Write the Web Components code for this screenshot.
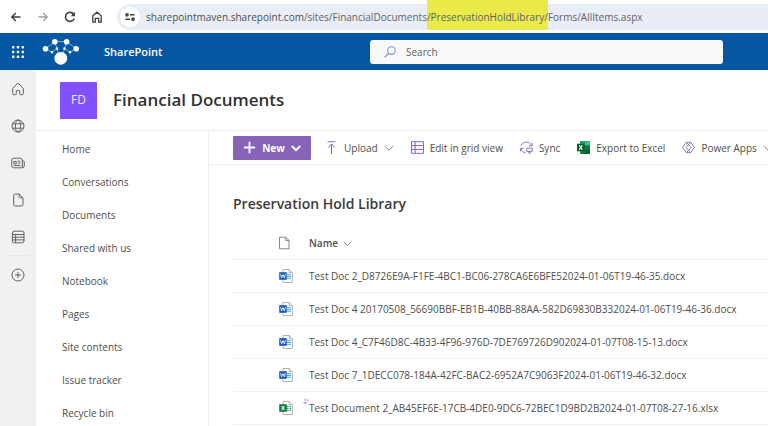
<!DOCTYPE html>
<html lang="en">
<head>
<meta charset="utf-8">
<title>Preservation Hold Library</title>
<style>
  html, body { height: 100%; }
  body { margin: 0; background: #fff; color: #504e4c; font: 10px/16px "Open Sans", "Noto Sans", sans-serif; overflow: hidden; }
</style>
</head>
<body>
<sp-app></sp-app>
<script>
const ICONS = {
  back: ['0 0 12 12', '<path d="M10.500 6H1.800M5.800 2 1.800 6l4 4" stroke-width="1.400"/>'],
  forward: ['0 0 12 12', '<path d="M1.500 6h8.700M6.200 2l4 4-4 4" stroke-width="1.300"/>'],
  reload: ['0 0 12 12', '<path d="M10.2 7.4A4.5 4.5 0 1 1 9.6 3.2" stroke-width="1.6"/><path d="M11 .8v4.400H6.800z" fill="currentColor" stroke="none"/>'],
  house: ['0 0 12 12', '<path d="M1.8 11.2V4.8L6 1.2l4.200 3.600v6.400H7.700V7.400H4.300v3.800z" stroke-width="1.300"/>'],
  tune: ['0 0 12 12', '<g stroke-width="1.500"><circle cx="3" cy="3.800" r="1.100"/><path d="M6 3.800h4.600M1.400 8.200h4.600"/><circle cx="9" cy="8.200" r="1.100"/></g>'],
  waffle: ['0 0 12 12', '<g fill="currentColor" stroke="none"><rect width="2.400" height="2.400" rx=".6"/><rect x="4.800" width="2.400" height="2.400" rx=".6"/><rect x="9.600" width="2.400" height="2.400" rx=".6"/><rect y="4.800" width="2.400" height="2.400" rx=".6"/><rect x="4.800" y="4.800" width="2.400" height="2.400" rx=".6"/><rect x="9.600" y="4.800" width="2.400" height="2.400" rx=".6"/><rect y="9.600" width="2.400" height="2.400" rx=".6"/><rect x="4.800" y="9.600" width="2.400" height="2.400" rx=".6"/><rect x="9.600" y="9.600" width="2.400" height="2.400" rx=".6"/></g>'],
  network: ['0 0 38 27', '<path d="M3.500 10.300 12.500 3.200h12.500l9 7.100-6 3.300M3.500 10.300l6.500 3.300 5-3.600-2.500-6.800M25 3.200 22.500 10l5.500 3.600M15 10l1.500 6M22.500 10l-1.500 6" stroke-width=".7" opacity=".75"/><g fill="currentColor" stroke="none"><circle cx="3.500" cy="10.300" r="2.800"/><circle cx="12.800" cy="3.200" r="2.800"/><circle cx="24.600" cy="3.200" r="2.800"/><circle cx="34.200" cy="10.300" r="2.800"/><circle cx="10" cy="13.700" r="1.200"/><circle cx="15" cy="10" r="1.200"/><circle cx="22.500" cy="10" r="1.200"/><circle cx="28" cy="13.700" r="1.200"/><circle cx="18.800" cy="19.800" r="6.400"/></g>'],
  search: ['0 0 13 13', '<circle cx="8" cy="5" r="4.100" stroke-width="1.100"/><path d="M5 8.100.8 12.200" stroke-width="1.200"/>'],
  home: ['0 0 14 14', '<path d="M1.700 6.400 6 2a1.400 1.400 0 0 1 2 0l4.300 4.400v5.300a1 1 0 0 1-1 1H9.500a.8.8 0 0 1-.8-.8V9.200a.7.7 0 0 0-.7-.7H6a.7.7 0 0 0-.7.7v2.700a.8.8 0 0 1-.8.8H2.700a1 1 0 0 1-1-1z"/>'],
  globe: ['0 0 14 14', '<circle cx="7" cy="7" r="6"/><ellipse cx="7" cy="7" rx="2.700" ry="6"/><path d="M1.600 4.800h10.800M1.600 9.200h10.800"/>'],
  news: ['0 0 14 14', '<path d="M11.300 11.800H2.700a2 2 0 0 1-2-2V4.200a2 2 0 0 1 2-2h6.600a2 2 0 0 1 2 2zM11.300 4.700c1.300 0 2 .5 2 1.600v3.500a2 2 0 0 1-2 2"/><path d="M2.800 5.400h2.400v2.400H2.800zM6.600 5.200h2.800M6.600 7.200h2.800M2.800 9.500h6.600"/>'],
  page: ['0 0 14 14', '<path d="M4.200 1h4L12 4.800v6.700A1.500 1.500 0 0 1 10.500 13H4.200a1.500 1.500 0 0 1-1.500-1.500v-9A1.500 1.500 0 0 1 4.200 1zM8.200 1v2.800a1 1 0 0 0 1 1H12"/>'],
  lists: ['0 0 14 14', '<path d="M3.200 1.200h8a1.800 1.800 0 0 1 1.800 1.800v8a1.800 1.800 0 0 1-1.800 1.800h-8A1.800 1.800 0 0 1 1.400 11V3a1.800 1.800 0 0 1 1.800-1.800zM1.400 4.500H13M1.400 7.200H13M1.400 9.900H13M4.600 4.500v8.300"/>'],
  add: ['0 0 14 14', '<circle cx="7" cy="7" r="6"/><path d="M7 4v6M4 7h6"/>'],
  plus: ['0 0 12 12', '<path d="M6 .8v10.400M.8 6h10.400" stroke-width="1.700"/>'],
  chevron: ['0 0 10 10', '<path d="M.8 3 5 7.200 9.200 3"/>'],
  upload: ['0 0 12 12', '<path d="M2.400.7h7.200M6 12V2.800M3 6l3-3.200L9 6" stroke-width=".9"/>'],
  grid: ['0 0 12 12', '<path d="M.5.600h11v10.800H.5zM.5 4.200h11M.5 7.800h11M3.800.600v10.800" stroke-width=".9"/>'],
  sync: ['0 0 13 12', '<path d="M.8 4.500C2.200 1.600 4.200.6 6.400.6c2.300 0 4.300 1.400 5.300 3.600M12.100 1.200v3.200H9M5.400 11.300C3 11 1.200 9.200.8 6.900M.6 9.800V6.900h3M6.800 6.700h5.500v3.200H6.800zM9.500 9.900v1.500M8 11.500h3" stroke-width=".9"/>'],
  power: ['0 0 13 12', '<path d="M4.400.8h4.200L12.500 6 8.600 11.200H4.400L.5 6zM4.400.8l4.800 5.200-4.800 5.200M8.600.8 4 6l4.600 5.200" stroke-width=".9" stroke-linejoin="round"/>'],
  excel: ['0 0 12 12', '<g stroke="none"><path d="M3 0h9v12H3z" fill="#107c41"/><path d="M3 0h4.500v4H3z" fill="#21a366"/><path d="M7.500 0H12v4H7.500z" fill="#33c481"/><path d="M7.500 8H12v4H7.500z" fill="#0f5f33"/><path d="M0 2.500h7v7H0z" fill="#0d5c30"/></g><path d="m2.100 4.100 2.800 3.800M4.900 4.100 2.100 7.900" stroke="#fff" stroke-width="1.100"/>'],
  file: ['0 0 14 14', '<path d="M.5 1.200h6.300l3.200 3.200v8.400H.5zM6.800 1.200v3.200H10" stroke-width=".9"/>'],
  docx: ['0 0 14 14', '<path d="M4 .5h6.200l3.200 3.200v9.800H4zM10.200.5v3.200h3.200" fill="#fff" stroke="#a19f9d" stroke-width=".8"/><path d="M8 5.700h4M8 7.500h4M8 9.300h4" stroke="#41a5ee" stroke-width="1"/><path d="M.2 3.200h7.600v7.600H.2z" fill="#185abd" stroke="none"/><path d="m1.600 5.200 1 3.600L4 5.600l1.400 3.200 1-3.600" stroke="#fff" stroke-width=".9"/>'],
  xlsx: ['0 0 14 14', '<path d="M4 .5h6.200l3.200 3.200v9.800H4zM10.200.5v3.200h3.200" fill="#fff" stroke="#a19f9d" stroke-width=".8"/><path d="M8 5.700h1.500M10.500 5.700H12M8 7.500h1.500M10.500 7.500H12M8 9.300h1.500M10.500 9.300H12" stroke="#21a366" stroke-width="1.200"/><path d="M.2 3.200h7.600v7.600H.2z" fill="#107c41" stroke="none"/><path d="m2.600 5 2.800 4M5.400 5 2.600 9" stroke="#fff" stroke-width="1.100"/>'],
  glimmer: ['0 0 7 7', '<path d="M1.200 1 2.900 3M3.900.5l.5 2.100M4.900 3.500 6.700 1.600M.4 4.600h3.400M3.800 4.700 1.200 6.500" stroke-width=".9"/>']
};

const BASE = `
  *, *::before, *::after { box-sizing: border-box; }
  a { color: inherit; text-decoration: none; }
  button { font: inherit; color: inherit; background: none; border: 0; padding: 0; margin: 0; display: inline-flex; align-items: center; justify-content: center; }
  h1, h2 { margin: 0; font-weight: 600; }
`;

function define(name, css, html) {
  const template = document.createElement('template');
  template.innerHTML = `<style>${BASE}${css}</style>${html}`;
  customElements.define(name, class extends HTMLElement {
    constructor() {
      super();
      this.attachShadow({ mode: 'open' }).append(template.content.cloneNode(true));
    }
  });
}

customElements.define('sp-icon', class extends HTMLElement {
  connectedCallback() {
    if (this.shadowRoot) return;
    const [box, art] = ICONS[this.getAttribute('name')];
    this.attachShadow({ mode: 'open' }).innerHTML = `
      <style>
        :host { display: inline-block; flex: none; width: var(--icon, 12px); height: var(--icon, 12px); }
        svg { display: block; width: 100%; height: 100%; }
      </style>
      <svg viewBox="${box}" fill="none" stroke="currentColor" aria-hidden="true">${art}</svg>`;
  }
});

define('browser-bar', `
  :host { display: flex; align-items: center; height: 33px; padding-left: 10px; color: #3c4043; background: #fff; }
  .tools { display: flex; gap: 15px; flex: none; margin-right: 14px; }
  .tools [disabled] { color: #9aa0a6; }
  .omnibox { flex: 1; min-width: 0; height: 26px; display: flex; align-items: center; gap: 6px; padding-left: 3px; background: #e9edf6; border-radius: 13px 0 0 13px; }
  .site { flex: none; width: 20px; height: 20px; border-radius: 50%; background: #fff; }
  .url { white-space: nowrap; color: #5f6368; outline: 0; }
  .host { color: #4a4d51; }
  mark { background: #eaea4a; color: inherit; padding: 10px 0 6px; }
`, `
  <div class="tools">
    <button aria-label="Back"><sp-icon name="back"></sp-icon></button>
    <button aria-label="Forward" disabled><sp-icon name="forward"></sp-icon></button>
    <button aria-label="Reload"><sp-icon name="reload"></sp-icon></button>
    <button aria-label="Home page"><sp-icon name="house"></sp-icon></button>
  </div>
  <div class="omnibox">
    <button class="site" aria-label="Site information"><sp-icon name="tune"></sp-icon></button>
    <div class="url" role="textbox" contenteditable="true" spellcheck="false" aria-label="Address"><span class="host">sharepointmaven.sharepoint.com</span>/sites/FinancialDocuments<mark>/PreservationHoldLibrary/</mark>Forms/AllItems.aspx</div>
  </div>
`);

define('suite-header', `
  :host { display: flex; align-items: center; height: 37px; padding-right: 45px; background: #0556a3; color: #fff; }
  .brand { flex: 0 0 370px; display: flex; align-items: center; padding-left: 12px; }
  .logo { --icon: 38px; margin: 0 24px 0 18px; height: 27px; display: flex; align-items: center; }
  .name { font-size: 11px; font-weight: 600; }
  .search { flex: 1; min-width: 0; height: 24px; display: flex; align-items: center; gap: 10px; padding: 0 14px; background: #fafafa; border-radius: 3px; color: #6f8fc9; }
  input { flex: 1; min-width: 0; border: 0; padding: 0; background: none; font: inherit; color: #323130; outline: 0; }
  input::placeholder { color: #616161; opacity: 1; }
`, `
  <div class="brand">
    <button aria-label="App launcher"><sp-icon name="waffle"></sp-icon></button>
    <a class="logo" href="#" aria-label="Organisation home"><sp-icon name="network"></sp-icon></a>
    <a class="name" href="#">SharePoint</a>
  </div>
  <label class="search"><sp-icon name="search"></sp-icon><input type="search" placeholder="Search" aria-label="Search"></label>
`);

define('app-rail', `
  :host { display: flex; flex-direction: column; flex: none; width: 36px; background: #f2f1f0; color: #616161; --icon: 14px; }
  button { height: 37px; width: 100%; }
  hr { width: 26px; margin: 0 auto; border: 0; border-top: 1px solid #e9e7e5; }
`, `
  <button aria-label="Home"><sp-icon name="home"></sp-icon></button>
  <button aria-label="My sites"><sp-icon name="globe"></sp-icon></button>
  <button aria-label="My news"><sp-icon name="news"></sp-icon></button>
  <button aria-label="My files"><sp-icon name="page"></sp-icon></button>
  <button aria-label="My lists"><sp-icon name="lists"></sp-icon></button>
  <hr>
  <button aria-label="Create"><sp-icon name="add"></sp-icon></button>
`);

define('site-header', `
  :host { display: flex; align-items: center; gap: 16px; height: 61px; padding-left: 24px; border-bottom: 1px solid #eeeeee; flex: none; }
  .tile { width: 37px; height: 37px; display: grid; place-items: center; background: #8250ff; color: #efe8ff; font-size: 12px; }
  h1 { font-size: 17px; line-height: 24px; color: #323130; }
`, `
  <a class="tile" href="#" aria-label="Site logo"><slot name="initials"></slot></a>
  <h1><slot></slot></h1>
`);

define('site-nav', `
  :host { display: block; flex: none; width: 173px; padding: 1px 0 0 26px; border-right: 1px solid #eeeeee; }
  ::slotted(a) { display: flex; align-items: center; height: 33px; color: inherit; text-decoration: none; }
`, `<nav aria-label="Site"><slot></slot></nav>`);

define('command-bar', `
  :host { display: flex; align-items: center; gap: 17px; height: 34px; padding-left: 24px; border-bottom: 1px solid #eeeeee; overflow: hidden; white-space: nowrap; }
  button { gap: 6px; flex: none; }
  sp-icon { color: #8764b8; --icon: 13px; }
  .chev { --icon: 10px; color: #8a8886; }
  .new { height: 24px; width: 78px; margin-right: -3px; background: #8764b8; color: #fff; font-weight: 700; border-radius: 1px; }
  .new sp-icon { color: #fff; }
  .new .chev { stroke-width: 2px; }
`, `
  <button class="new"><sp-icon name="plus"></sp-icon>New<sp-icon class="chev" name="chevron"></sp-icon></button>
  <button><sp-icon name="upload"></sp-icon>Upload<sp-icon class="chev" name="chevron"></sp-icon></button>
  <button><sp-icon name="grid"></sp-icon>Edit in grid view</button>
  <button><sp-icon name="sync"></sp-icon>Sync</button>
  <button><sp-icon name="excel"></sp-icon>Export to Excel</button>
  <button><sp-icon name="power"></sp-icon>Power Apps<sp-icon class="chev" name="chevron"></sp-icon></button>
`);

const FILES = [
  ['docx', 'Test Doc 2_D8726E9A-F1FE-4BC1-BC06-278CA6E6BFE52024-01-06T19-46-35.docx'],
  ['docx', 'Test Doc 4 20170508_56690BBF-EB1B-40BB-88AA-582D69830B332024-01-06T19-46-36.docx'],
  ['docx', 'Test Doc 4_C7F46D8C-4B33-4F96-976D-7DE769726D902024-01-07T08-15-13.docx'],
  ['docx', 'Test Doc 7_1DECC078-184A-42FC-BAC2-6952A7C9063F2024-01-06T19-46-32.docx'],
  ['xlsx', 'Test Document 2_AB45EF6E-17CB-4DE0-9DC6-72BEC1D9BD2B2024-01-07T08-27-16.xlsx', true]
];

define('doc-library', `
  :host { display: block; padding: 26px 0 0 24px; }
  h2 { font-size: 14px; line-height: 26px; color: #3b3a39; margin-bottom: 10px; }
  table { width: 100%; border-collapse: separate; border-spacing: 0; table-layout: fixed; }
  th, td { height: 33px; padding: 0; text-align: left; border-bottom: 1px solid #f3f2f1; vertical-align: middle; font-weight: 400; white-space: nowrap; }
  th { font-weight: 600; }
  .type { width: 76px; padding-left: 46px; }
  .type sp-icon { --icon: 14px; display: block; color: #797775; }
  td.name { position: relative; }
  th button { gap: 5px; --icon: 9px; }
  th button sp-icon { color: #8a8886; }
  .fresh { --icon: 7px; position: absolute; left: -6px; top: 6px; color: #a98bd8; }
`, `
  <h2>Preservation Hold Library</h2>
  <table>
    <thead><tr>
      <th class="type" scope="col" aria-label="File type"><sp-icon name="file"></sp-icon></th>
      <th scope="col"><button>Name<sp-icon name="chevron"></sp-icon></button></th>
    </tr></thead>
    <tbody>${FILES.map(([type, name, fresh]) => `
      <tr><td class="type"><sp-icon name="${type}"></sp-icon></td>
      <td class="name">${fresh ? '<sp-icon class="fresh" name="glimmer"></sp-icon>' : ''}<a href="#">${name}</a></td></tr>`).join('')}
    </tbody>
  </table>
`);

define('sp-app', `
  :host { display: flex; flex-direction: column; height: 100%; }
  browser-bar, suite-header { flex: none; }
  .body { flex: 1; min-height: 0; display: flex; }
  .site { flex: 1; min-width: 0; display: flex; flex-direction: column; }
  .columns { flex: 1; min-height: 0; display: flex; }
  main { flex: 1; min-width: 0; }
`, `
  <browser-bar></browser-bar>
  <suite-header></suite-header>
  <div class="body">
    <app-rail></app-rail>
    <div class="site">
      <site-header><span slot="initials">FD</span>Financial Documents</site-header>
      <div class="columns">
        <site-nav>
          <a href="#">Home</a><a href="#">Conversations</a><a href="#">Documents</a><a href="#">Shared with us</a><a href="#">Notebook</a><a href="#">Pages</a><a href="#">Site contents</a><a href="#">Issue tracker</a><a href="#">Recycle bin</a>
        </site-nav>
        <main><command-bar></command-bar><doc-library></doc-library></main>
      </div>
    </div>
  </div>
`);
</script>
</body>
</html>
